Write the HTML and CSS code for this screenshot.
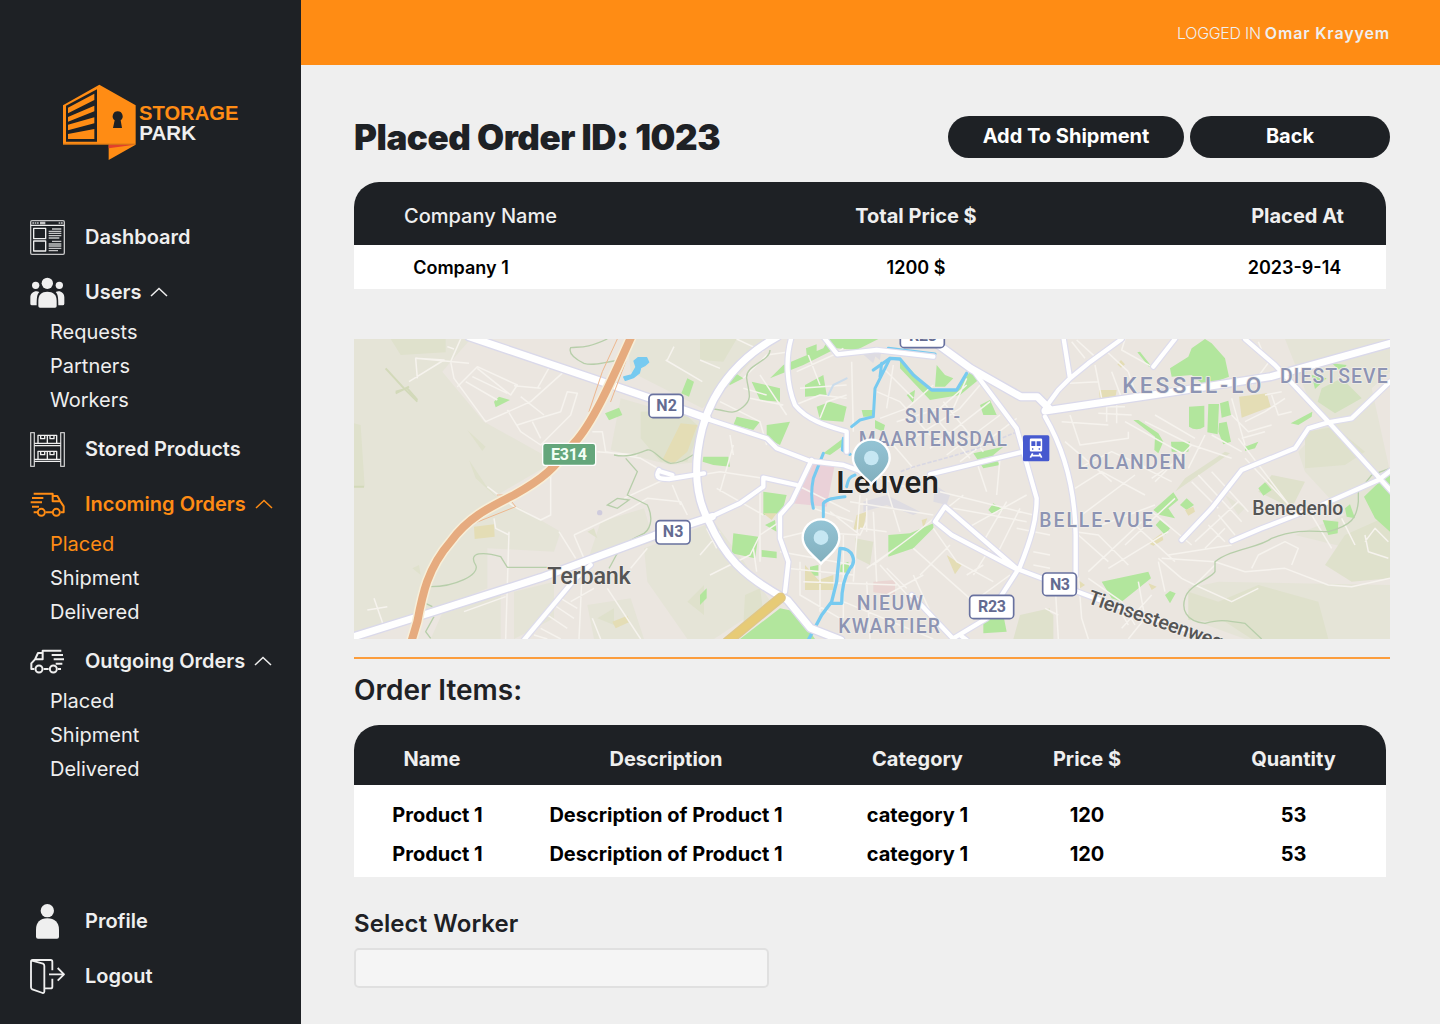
FILE: index.html
```html
<!DOCTYPE html>
<html lang="en">
<head>
<meta charset="utf-8">
<title>Storage Park - Placed Order</title>
<link rel="stylesheet" href="styles.css">
</head>
<body>
<div class="app">
  <aside class="sidebar">
    <svg class="logo" viewBox="30 21 540 240" role="img" aria-label="Storage Park">
      <path class="brand" d="M39 91 148 29 257 91V209L176 255V209H39Z"/>
      <path class="fold" d="M176 209H254L176 220Z"/>
      <path class="cut" d="M39 206.500H257V208.500H39Z" opacity=".3"/>
      <path class="cut" d="M48 92 141 43V200H48Z"/>
      <path class="brand" d="M54 98 133 56V75L54 115ZM54 126 133 92V109L54 140ZM54 149 133 127V145L54 166ZM54 177 133 162V192H54Z"/>
      <path class="cut" d="M203 109a15 15 0 0 1 9 27L216 159H189L194 136a15 15 0 0 1 9-27Z"/>
      <text class="logo-storage" x="267" y="135" textLength="298" lengthAdjust="spacingAndGlyphs">STORAGE</text>
      <text class="logo-park" x="268" y="194" textLength="170" lengthAdjust="spacingAndGlyphs">PARK</text>
    </svg>

    <nav class="nav">
      <a class="nav-item">
        <svg class="icon" viewBox="30 30 105 105">
          <g class="line">
            <g opacity=".8">
              <rect x="32" y="32" width="101" height="101" rx="4" stroke-width="4"/>
              <path d="M37 39H58M116 39H129" stroke-width="4" stroke-dasharray="5 2"/>
              <path d="M60 39H76" stroke-width="8"/>
              <path d="M96 57H124M86 64H124M86 70H124M86 77H124M86 84H118M96 94H124M86 102H124M86 108H124M86 115H124M86 122H114" stroke-width="4"/>
            </g>
            <path d="M32 46H133" stroke-width="4"/>
            <rect x="41" y="55" width="36" height="31" stroke-width="4"/>
            <rect x="41" y="93" width="36" height="30" stroke-width="4"/>
          </g>
        </svg>
        <span>Dashboard</span>
      </a>

      <a class="nav-item">
        <svg class="icon" viewBox="30 195 105 105">
          <g class="solid">
            <circle cx="82" cy="220" r="17"/><circle cx="47" cy="226" r="11"/><circle cx="118" cy="226" r="11"/>
            <path d="M55 288V272c0-18 10-27 27-27s28 9 28 27v16q0 5-5 5H60q-5 0-5-5Z"/>
            <path d="M58 246C51 253 50 264 50 286H36q-5 0-5-5V262c0-13 14-22 27-16ZM107 246c7 7 8 18 8 40h13q5 0 5-5V262c0-13-13-22-26-16Z"/>
          </g>
        </svg>
        <span>Users</span>
        <svg class="chevron" viewBox="0 0 18 10"><path d="M1 9 9 1.500 17 9"/></svg>
      </a>
      <div class="subnav"><a>Requests</a><a>Partners</a><a>Workers</a></div>

      <a class="nav-item">
        <svg class="icon" viewBox="30 21 105 105">
          <g class="line" stroke-width="4">
            <path d="M32 23H43V124H32ZM122 23H133V124H122Z" opacity=".8"/>
            <path d="M43 55H122M43 62H122M43 103H122M43 109H122"/>
            <path d="M54 55V31H110V55M82 31V55M62 31V41H74V31M90 31V41H102V31M54 103V79H110V103M82 79V103M62 79V89H74V79M90 79V89H102V79"/>
          </g>
        </svg>
        <span>Stored Products</span>
      </a>

      <a class="nav-item active">
        <svg class="icon" viewBox="30 186 105 105">
          <g class="line" stroke-width="6">
            <path d="M41 206H98V229H121L131 244V262H122M98 213H112L121 229M41 262H52M77 262H96"/>
            <path d="M36 219H70M32 232H66M36 245H57"/>
            <circle cx="64" cy="262" r="10.500"/><circle cx="109" cy="262" r="10.500"/>
          </g>
        </svg>
        <span>Incoming Orders</span>
        <svg class="chevron" viewBox="0 0 18 10"><path d="M1 9 9 1.500 17 9"/></svg>
      </a>
      <div class="subnav"><a class="active">Placed</a><a>Shipment</a><a>Delivered</a></div>

      <a class="nav-item">
        <svg class="icon" viewBox="30 12 105 105">
          <g class="line" stroke-width="6">
            <path d="M124 32H68V58H45L34 70V87H43M68 39H54L45 58M71 87H86M114 87H123"/>
            <path d="M95 45H129M101 58H132M107 71H127"/>
            <circle cx="57" cy="87" r="10.500"/><circle cx="100" cy="87" r="10.500"/>
          </g>
        </svg>
        <span>Outgoing Orders</span>
        <svg class="chevron" viewBox="0 0 18 10"><path d="M1 9 9 1.500 17 9"/></svg>
      </a>
      <div class="subnav"><a>Placed</a><a>Shipment</a><a>Delivered</a></div>
    </nav>

    <nav class="nav nav-bottom">
      <a class="nav-item">
        <svg class="icon" viewBox="30 27 105 105">
          <g class="solid"><circle cx="82" cy="47" r="20"/><path d="M48 125V104c0-21 12-34 34-34s35 13 35 34v21q0 6-6 6H54q-6 0-6-6Z"/></g>
        </svg>
        <span>Profile</span>
      </a>
      <a class="nav-item">
        <svg class="icon" viewBox="30 192 105 105">
          <g class="line" stroke-width="5.500">
            <path d="M36 197 69 206Q73 208 73 213V290Q72 295 68 294L37 283Q33 281 33 277V200Q33 195 38 195H92Q97 195 97 200V226M97 251V275Q97 280 92 280H74M87 238H131M113 219 132 238 113 257"/>
          </g>
        </svg>
        <span>Logout</span>
      </a>
    </nav>
  </aside>

  <div class="page">
    <header class="topbar"><span class="logged">LOGGED IN</span><span class="user">Omar Krayyem</span></header>
    <main class="content">
      <div class="heading">
        <h1>Placed Order ID: 1023</h1>
        <div class="actions">
          <button class="btn btn-ship">Add To Shipment</button>
          <button class="btn btn-back">Back</button>
        </div>
      </div>

      <section class="table summary">
        <div class="row head"><span class="company">Company Name</span><span>Total Price $</span><span>Placed At</span></div>
        <div class="row data"><span>Company 1</span><span>1200 $</span><span>2023-9-14</span></div>
      </section>

      <svg class="map" viewBox="0 12 3108 900" preserveAspectRatio="none">
        <defs>
          <g id="wide-roads">
            <path d="M345 5 750 142 890 190 1060 250M0 905 170 852 560 728 900 602 1075 545"/>
            <path d="M1270 5C1170 60 1080 150 1045 280C1020 380 1020 480 1065 560C1110 660 1160 720 1300 795L1370 880 1460 915"/>
            <path d="M1740 20 1850 100 2000 185H2050L2090 225M2073 228 2450 172 2750 125 3120 22"/>
          </g>
          <g id="mid-roads">
            <path d="M510 915 660 735 710 690M915 405C900 430 920 432 945 432L1050 415M915 408 955 420"/>
            <g transform="translate(1038)">
              <path d="M0 245 200 310 230 340 330 378 430 390 500 415M275 5C255 70 260 150 285 210 325 260 390 275 440 290V350M370 5 412 58 530 45 700 65"/>
              <path d="M0 560 120 505 190 455V428L290 450M335 375 275 500 240 540V610L265 680 255 770M815 100 950 280 1010 490C1010 560 990 620 960 695L860 850 760 910M690 418 970 350M955 705 735 515 705 560 755 600 955 705M800 915 780 900M635 780 760 912"/>
            </g>
            <g transform="translate(2073)">
              <path d="M55 5 75 130 40 165 0 220M75 130 130 85 230 12M390 12 325 95M600 12 690 90 850 260 1040 470M410 615 500 520 590 405 750 340 790 280 850 262 920 250 1035 140M560 618 650 580 830 510 1000 435 1040 405M0 245C55 340 90 450 92 600V720M-75 705 150 790 500 912"/>
            </g>
          </g>
          <path id="motorway" d="M832 5C780 120 720 260 660 325 600 400 570 430 480 480 400 520 340 550 290 620 220 700 205 780 190 860L172 920"/>
          <path id="parkway" d="M1120 920 1280 788"/>
          <linearGradient id="pin-fill" x2="0" y2="1"><stop offset="0" stop-color="#94c4d5"/><stop offset="1" stop-color="#82afbd"/></linearGradient>
          <g id="pin">
            <path d="M0 78C-10 64-55 35-55 0A55 55 0 1 1 55 0C55 35 10 64 0 78Z" fill="url(#pin-fill)" stroke="#fff" stroke-width="7"/>
            <circle r="22" fill="#c6e7f3"/>
          </g>
        </defs>
        <rect y="12" width="3108" height="900" fill="#ebe6e0"/>

        <g fill="#e5e4d7">
          <path d="M0 12H350L290 80 265 110 390 260 560 355 600 380 430 480 620 590 600 650 400 640V760L230 830 0 912Z"/>
          <path d="M820 12H1250L1130 150 1045 220 830 110ZM800 190 1045 260 1040 380 950 390 770 345ZM740 560 870 520 900 620 700 680ZM870 640 1080 560 1170 680 1250 800 1080 912H1000L880 740ZM480 770 600 740V850L480 912ZM280 800 440 760V912H230ZM700 810 830 790 870 912H720Z"/>
          <path transform="translate(2073)" d="M720 12H1035V110L980 160 1035 410 780 410 760 350 840 265 790 190ZM780 410H1035V912H600L430 850V760L520 740 1035 750V670L750 600 900 540ZM540 480 600 520 580 540Z"/>
        </g>
        <g fill="#dfe1cc">
          <path d="M110 12H275V52L140 60ZM0 265 20 270 32 455H0ZM340 285 395 335 385 348ZM345 375 395 450 430 490 365 430ZM860 230 980 225 1040 280 1000 380 920 380 860 310ZM730 850 780 820V870ZM175 700 195 690 200 720ZM1000 800 1050 750 1050 840ZM700 590 720 580 730 610Z"/>
          <path transform="translate(1038)" d="M0 12H110L70 80 0 75ZM465 610 520 620 510 690 470 670ZM960 840 1050 820V912H940ZM135 780 180 760 190 830 130 870Z"/>
          <path transform="translate(2073)" d="M420 430 540 350 555 355 390 470ZM780 290 870 275 960 350 900 390 780 400ZM900 600 1035 540V730L920 740 840 690ZM430 770 520 800 640 750 820 800 850 912H620L540 860 430 855ZM680 420 780 440 740 520 640 470ZM0 820 25 840V912H0Z"/>
        </g>
        <g fill="#b2e69d">
          <path d="M420 200 435 185 468 195 425 217ZM982 175 1000 130 1020 140 1005 185ZM753 235 795 218 805 240 765 256Z"/>
          <g transform="translate(1038)">
            <path d="M385 12H535L470 45 410 40 310 90 210 130 250 90 370 40ZM318 40 350 28 350 52 320 60ZM315 150 370 120 380 180 315 185ZM350 215 390 200 440 215 430 260 360 255ZM155 140 240 160 240 200 180 195ZM110 245 180 260 160 285 100 270ZM200 270 270 260 240 330 200 310ZM70 130 100 110 130 130 90 150ZM10 365 85 365 90 395 40 390 8 380ZM190 470 260 480 245 535 190 540ZM195 570 225 555 230 590ZM100 595 175 605 165 670 95 655ZM185 645 230 650V670L185 665ZM565 600 630 595 700 565 700 580 640 640 565 665ZM330 695 355 690V722H330ZM422 690 445 680 450 715 420 710ZM705 155 710 90 735 120 760 130 735 155ZM600 70 690 165 770 165 810 110 835 135 780 180 690 195 600 100ZM485 225 520 225 515 245H490ZM525 255 555 270 550 290 525 280ZM840 210 870 195 890 240 850 240ZM820 355 910 335 880 360 900 390 850 400ZM865 525 880 505 910 525 875 535ZM620 180 645 165 640 205ZM850 850 910 840 920 890 850 895ZM120 912 240 820 290 830 345 912ZM0 780 20 760V790L0 810ZM370 355 430 310 425 335 390 360Z"/>
          </g>
          <g transform="translate(2073)">
            <path d="M375 100 430 65 440 40 480 12 500 25 540 70 552 125 480 152 440 120 380 125ZM277 52 285 50 318 92 312 95ZM432 215 478 212V275Q455 290 432 275ZM490 207H522L518 298 487 292ZM525 205 550 197 558 240 530 248ZM522 265 545 260 558 320 535 328 520 290ZM265 255 280 255 340 295 355 320 340 355 328 345 330 305ZM378 320 435 320 430 350 380 350ZM600 335 640 320 630 340 600 348ZM737 265 802 230 800 245 760 270ZM325 525 385 472 400 495 370 520 390 550 345 540ZM405 510 425 490 447 510 425 525ZM332 570 345 555 375 580 360 600ZM640 460 660 442 680 465 655 482ZM170 740 310 710 318 730 230 800 200 790ZM360 780 375 768 392 775 375 805ZM833 555 880 560 878 595 850 600ZM900 520 915 508 930 550 905 545ZM957 485 1035 410V590L990 550ZM860 85 905 90 890 110ZM800 120 845 130 810 162Z"/>
            <path d="M830 160 890 130 950 190 870 235 818 200Z" fill="#d3e1bf"/>
          </g>
        </g>
        <g fill="#e4ddb5">
          <path d="M360 575 420 568 422 605 362 612ZM980 265 1030 270 1000 350 960 385 925 375ZM775 860 820 842 828 860 785 880Z"/>
          <path transform="translate(1038)" d="M315 690 355 735 400 720 400 765 315 765ZM190 535 230 535 215 555ZM470 540 500 530 490 580 460 585ZM740 660 785 690 765 718ZM665 555 682 550 670 580Z"/>
          <path transform="translate(2073)" d="M582 185 665 175 677 215 590 248ZM162 165 215 165 210 195 165 198ZM217 88 228 75 240 88 228 98ZM420 525 445 515 450 530 430 542ZM310 625 350 595 355 615 325 632ZM100 735 120 750 105 760ZM310 745 335 755 320 765Z"/>
        </g>
        <path transform="translate(1038)" d="M335 380 405 385 380 515 275 505Z" fill="#ead1d8"/>
        <path transform="translate(1038)" d="M520 740 585 735V780L520 772Z" fill="#ead6d3"/>
        <path transform="translate(1038)" d="M490 500 560 480 660 530 640 540 560 510 490 530ZM705 450 750 480 740 510 700 500ZM480 50 530 50 520 85ZM500 45 545 40 540 75Z" fill="#dedce2"/>
        <circle cx="737" cy="533" r="8" fill="#cfcbdd"/>
        <path d="M95 100 150 160 190 200M125 175 165 155M125 170 160 160 190 195M0 455H30" fill="none" stroke="#d2d9b9" stroke-width="6"/>

        <g class="minor">
          <path d="M320 12 290 80 300 130 395 260 530 200 630 110M165 140 270 75 185 70 190 130M185 70 345 85M310 155 370 95 490 150 470 180 370 100M355 125 460 175M335 140 430 195M480 152 560 160M500 185 570 240M460 225 500 290 560 330 650 240 670 175 640 170 620 230 520 260 490 270M560 310 535 260M590 90 550 160M280 35 300 42M715 290 745 290 755 350 860 370 920 405M730 350 850 360M590 400V540L560 555 480 515 400 455M660 600 690 670M615 590 665 670M660 600 830 520 880 490 980 500 1000 540M810 490 960 420M955 450 980 510M465 590 455 912M420 550 425 580 465 600M330 830 455 785M40 825 100 815M60 790 95 890M685 700 675 912M600 810 660 850M580 840 640 880M620 790 670 820M760 760 860 912M720 760 650 800M880 640 830 700M540 900 580 912M560 880 620 912M715 850 740 912M935 75 1045 140M960 35 940 75"/>
          <g transform="translate(1038)">
            <path d="M0 75 60 100M110 12 190 50M270 50 200 60 130 130M60 200 180 260 200 330M90 300 100 360M150 190 250 210M130 160 200 180M180 120 260 240M290 110 400 60 430 40M285 210 360 180 440 190M300 160 440 150M325 60 360 150M360 250 380 200 440 180M455 80 460 290M530 170 600 200 690 300M550 100 640 190M580 90 560 220M540 250 620 220 700 150M590 260 720 220 800 150M640 310 780 220 840 150M690 340 870 200M740 360 900 240M780 380 950 250M580 330 640 400M730 200 850 350M700 240 810 370M800 130 760 220M830 380 860 470M900 370 890 480M720 470 1000 540M760 520 980 560M800 580 980 480M850 620 920 500M890 660 960 520M20 580 50 640M0 660 60 590M30 720 150 660 180 600 240 560M180 680 180 470M50 460 190 540M100 330 60 470M0 420 60 410 190 430M240 610 320 590 480 600M240 650 460 690M300 680V780L420 850M310 740 590 750M360 690V830M260 700 460 720M480 480 460 740M520 530 530 740M480 580 560 590M390 530 480 600 500 560M520 690 640 600 790 480M640 640 820 800M670 720 560 780M560 700 620 760M500 740 510 912M600 630 500 700M700 580 770 680 880 740M750 630 660 720M800 720 850 690M820 800 930 720M640 720 700 850M870 640 820 720M540 690 640 800M160 640 170 710M100 680 180 730M430 600 430 850M430 800 700 912M340 520 460 560M290 450 450 530M540 430 660 470M500 490 500 590M560 460 600 590M450 500 700 540M1000 650 1050 660M1000 690 1050 700M950 580 1050 600"/>
          </g>
          <g transform="translate(2073)">
            <path d="M80 20 120 70M95 15 150 65M130 85 160 60M240 12 230 45 320 95M180 45 250 110M150 90 170 190M75 145 160 140M200 110 230 190M250 110 270 170M185 200V260M215 200V265M160 235 260 240M185 215H240M75 240 105 330 250 310 250 290M50 260 190 270M300 260 440 330 560 370M330 240 450 310M240 260 420 360 320 430M260 380 380 440M440 330 330 440M100 400 200 350 310 400M60 320 200 440M90 460 170 410 300 480M110 540 270 420M170 570 330 510M240 630 390 490M90 590 160 600 250 690M130 710 290 560M190 700 370 590M100 600 190 680M270 570 390 680M320 530 440 630M350 670 510 680M370 660 560 630M440 440 520 520M460 420 590 560M500 410 610 530M580 310 740 520M600 370 760 540M450 620 580 500M480 640 540 580M490 570 540 620M520 540 570 600M560 240 610 290 680 270M600 260 660 230 720 190M590 310 660 290M680 180 700 240 740 230M660 180 710 170M560 190 600 330M500 300 590 350M480 300 430 400M510 680 600 710 720 700 850 750 920 755 1035 730M510 690 450 750 410 730 340 670M450 750 560 800 640 760M620 700 640 660 720 620 760 640 740 690M100 720 110 850 130 912M130 730 230 800 270 870M280 740 300 850 250 912M210 800 250 870M230 880 320 780M340 680 360 770M30 740 40 912M0 820 40 840M620 150 680 70M960 620 990 580 1030 620M960 600 970 650 1030 670M800 540 860 640M890 550 930 630M640 20 660 70"/>
          </g>
        </g>
        <g class="trail">
          <path d="M760 12C700 40 680 35 650 38Q640 60 690 85C720 95 750 80 800 75M780 360C830 370 860 350 880 345S920 380 950 385C990 385 1010 360 1035 350M815 370 850 410 820 480 880 510C900 550 890 590 860 600 790 630 790 660 765 700M760 510 790 490 825 495 790 520ZM230 755C300 755 380 720 365 690 340 650 390 650 440 665L460 697H600M215 805 235 815M240 845 215 890 230 910"/>
          <path transform="translate(1038)" d="M210 45C210 80 135 90 140 130S160 190 130 215 90 230 60 225L30 220"/>
          <path transform="translate(2073)" d="M650 912 600 865C550 860 540 850 480 865 420 860 410 820 420 790 430 750 500 730 510 710V680C560 640 640 640 680 610 760 580 800 590 850 590 920 570 935 550 940 500V470L980 420 1035 400"/>
        </g>

        <g class="water">
          <path d="M809 126 832 120 846 96 840 78 852 68 878 68 884 82 872 92 860 98 856 114 838 128 814 136Z" fill="#77caf0" stroke-width="4"/>
          <g transform="translate(1038)">
            <path d="M325 915 365 840 395 800 410 740 420 640C460 640 470 680 450 700 430 730 425 770 425 805H395" stroke-width="10"/>
            <path d="M520 105 570 70 600 72 640 120 695 165 770 165 800 115" stroke-width="10"/>
            <path d="M570 70 540 130 525 160 520 245 480 255 455 275M540 125 545 85M565 40 705 57M430 310 427 345 450 358M370 355 340 430Q330 480 340 520M370 545V505C380 490 410 488 435 485M440 455C445 430 450 425 465 420" stroke-width="9"/>
            <path d="M385 180 400 150 440 130" stroke="#cbdceb" stroke-width="6"/>
          </g>
        </g>
        <path d="M1640 410C1700 385 1750 380 1870 340L1990 290" fill="none" stroke="#d8d7e3" stroke-width="5" stroke-dasharray="12 5"/>

        <g fill="none" stroke-linejoin="round" stroke-linecap="round">
          <use href="#mid-roads" stroke="#dddcec" stroke-width="20"/>
          <use href="#wide-roads" stroke="#dad9ea" stroke-width="29"/>
          <use href="#mid-roads" stroke="#fff" stroke-width="13"/>
          <use href="#wide-roads" stroke="#fff" stroke-width="21"/>
          <use href="#parkway" stroke="#dfc789" stroke-width="31"/>
          <use href="#parkway" stroke="#e7cb76" stroke-width="23"/>
          <path d="M790 12 745 110 705 230M815 80 770 200M430 480 485 480M360 565 485 515 465 490" stroke="#edb78e" stroke-width="3"/>
          <use href="#motorway" stroke="#f7efd9" stroke-width="33"/>
          <use href="#motorway" stroke="#e6ab7f" stroke-width="24"/>
        </g>

        <g class="shield">
          <rect x="885" y="178" width="102" height="70" rx="12"/>
          <rect x="906" y="557" width="102" height="70" rx="12"/>
          <rect x="1639" y="-30" width="132" height="68" rx="12"/>
          <rect x="1847" y="781" width="132" height="70" rx="12"/>
          <rect x="2066" y="714" width="101" height="68" rx="12"/>
          <text x="938" y="228" textLength="62">N2</text>
          <text x="957" y="606" textLength="62">N3</text>
          <text x="1707" y="19" textLength="84">R23</text>
          <text x="1914" y="831" textLength="84">R23</text>
          <text x="2118" y="765" textLength="60">N3</text>
        </g>
        <rect x="566" y="325" width="159" height="66" rx="8" fill="#64a67b" stroke="#fff" stroke-width="4"/>
        <text class="motorway-label" x="645" y="375" textLength="108">E314</text>

        <g class="district">
          <text x="1652" y="263" textLength="166">SINT-</text>
          <text x="1514" y="332" textLength="445">MAARTENSDAL</text>
          <text x="2305" y="174" textLength="417" font-size="68">KESSEL-LO</text>
          <text x="2778" y="144" textLength="323">DIESTSEVE</text>
          <text x="2170" y="403" textLength="325">LOLANDEN</text>
          <text x="2056" y="575" textLength="340">BELLE-VUE</text>
          <text x="1508" y="824" textLength="198">NIEUW</text>
          <text x="1453" y="893" textLength="305">KWARTIER</text>
        </g>
        <g class="place">
          <text x="580" y="747" font-size="70" textLength="250">Terbank</text>
          <text x="2695" y="540" font-size="58" textLength="273">Benedenlo</text>
          <text transform="translate(2198 804) rotate(19)" font-size="60" textLength="425">Tiensesteenweg</text>
          <text class="city" x="1447" y="474" textLength="308">Leuven</text>
        </g>
        <g transform="translate(1038)">
          <rect x="969" y="301" width="79" height="78" rx="5" fill="#4659cf"/>
          <path d="M993 314H1023V346H993Z" fill="#fff" stroke="#fff" stroke-width="7" stroke-linejoin="round"/>
          <path d="M994 319H1006V333H994ZM1010 319H1022V333H1010ZM996 340H1000V344H996ZM1016 340H1020V344H1016Z" fill="#4659cf"/>
          <path d="M998 355 991 368M1018 355 1025 368M995 362H1021" stroke="#fff" stroke-width="5"/>
        </g>
        <use href="#pin" transform="translate(1552 369)"/>
        <use href="#pin" transform="translate(1401 608)"/>
      </svg>

      <section class="items">
        <h2>Order Items:</h2>
        <div class="table products">
          <div class="row head"><span>Name</span><span>Description</span><span>Category</span><span>Price $</span><span>Quantity</span></div>
          <div class="body">
            <div class="row data"><span>Product 1</span><span>Description of Product 1</span><span>category 1</span><span>120</span><span>53</span></div>
            <div class="row data"><span>Product 1</span><span>Description of Product 1</span><span>category 1</span><span>120</span><span>53</span></div>
          </div>
        </div>
      </section>

      <label class="worker">Select Worker<input type="text"></label>
    </main>
  </div>
</div>
</body>
</html>
```
FILE: styles.css
```css
* { box-sizing: border-box; }
body {
  margin: 0;
  font-family: Inter, "Liberation Sans", sans-serif;
  background: #efefef;
  color: #1e2125;
}
.app { display: flex; width: 1440px; height: 1024px; overflow: hidden; }

/* Sidebar */
.sidebar {
  display: flex;
  flex-direction: column;
  width: 301px;
  flex: none;
  padding: 82px 0 30px 30px;
  background: #1e2125;
  color: #efefef;
}
.logo { width: 180px; height: 80px; margin: 0 0 58px 30px; display: block; }
.logo text { font-family: "Liberation Sans", Arial, sans-serif; font-weight: 700; font-size: 61px; }
.brand, .logo-storage { fill: #ff8c14; }
.logo-park { fill: #efefef; }
.fold { fill: #e2402b; }
.cut { fill: #1e2125; }
.nav { display: flex; flex-direction: column; }
.nav-item {
  display: flex;
  align-items: center;
  height: 35px;
  margin-bottom: 20px;
  font-size: 20px;
  font-weight: 600;
}
.nav-item span { padding-bottom: 1px; }
.icon { width: 35px; height: 35px; margin-right: 20px; flex: none; }
.line { fill: none; stroke: currentColor; stroke-linejoin: round; }
.solid { fill: currentColor; }
.chevron { width: 18px; height: 10px; margin: 0 0 1px 9px; fill: none; stroke: currentColor; stroke-width: 1.5; }
.subnav {
  display: flex;
  flex-direction: column;
  margin: -15px 0 15px 20px;
  font-size: 20px;
  line-height: 34px;
}
.active { color: #ff8c14; }
.nav-bottom { margin-top: auto; gap: 20px; }
.nav-bottom .nav-item { margin: 0; }

/* Page */
.page { flex: 1; }
.topbar {
  display: flex;
  align-items: center;
  justify-content: flex-end;
  gap: 4px;
  height: 65px;
  padding-right: 50px;
  background: #ff8c14;
  color: #efefef;
  font-size: 16px;
}
.logged { font-weight: 300; letter-spacing: -.3px; }
.user { font-weight: 600; letter-spacing: .85px; }
.content { display: flex; flex-direction: column; padding: 51px 50px 0 53px; }
.heading { display: flex; justify-content: space-between; align-items: center; height: 42px; }
h1 { margin: 0; font-size: 35px; font-weight: 900; letter-spacing: -.45px; }
.actions { display: flex; gap: 6px; }
.btn {
  height: 42px;
  padding: 0 0 2px;
  border: 0;
  border-radius: 21px;
  background: #1e2125;
  color: #fff;
  font: 700 20px Inter, sans-serif;
}
.btn-ship { width: 236px; }
.btn-back { width: 200px; }

.table { width: 1032px; background: #fff; border-radius: 25px 25px 0 0; overflow: hidden; }
.row { display: grid; align-items: center; text-align: center; }
.head { background: #1e2125; color: #efefef; font-size: 20px; font-weight: 650; }
.data { color: #000; }
.summary { margin-top: 24px; }
.summary .row { grid-template-columns: 253px 618px 145px; }
.summary .head { height: 63px; padding-top: 5px; }
.summary .company { font-weight: 500; }
.summary .data { height: 44px; font-size: 18px; font-weight: 600; }
.summary .data span:first-child { padding-right: 39px; }
.summary .data span:last-child { padding-right: 6px; }

.items { margin-top: 18px; border-top: 2px solid #fc9d3c; }
h2 { margin: 14px 0 18px; font-size: 28px; line-height: 34px; font-weight: 600; }
.products .row { grid-template-columns: 156px 312px 191px 148px 225px; font-size: 20px; }
.products .row span:last-child { padding-left: 40px; }
.products .head { height: 60px; padding-top: 8px; }
.products .body { padding: 10px 0 4px; }
.products .data { height: 39px; font-weight: 700; }
.products .data span:first-child { padding-left: 11px; }

.worker { display: flex; flex-direction: column; width: 415px; margin-top: 32px; font-size: 24px; line-height: 30px; font-weight: 570; letter-spacing: .08px; }
.worker input { height: 40px; margin-top: 9px; border: 2px solid #e0e0e0; border-radius: 5px; background: #f5f5f5; }

/* Map */
.map { display: block; width: 1036px; height: 300px; margin-top: 50px; }
.minor { fill: none; stroke: #f6f3ee; stroke-width: 4.5; stroke-linejoin: round; }
.trail { fill: none; stroke: #b7ceaa; stroke-width: 4; }
.water { fill: none; stroke: #77caf0; stroke-linejoin: round; stroke-linecap: round; }
.map text { font-family: Roboto, "Noto Sans", sans-serif; paint-order: stroke; stroke: #f1eeea; stroke-width: 5px; stroke-linejoin: round; }
.shield rect { fill: #fff; stroke: #68719f; stroke-width: 5; }
.shield text { font-size: 48px; font-weight: 700; fill: #646b91; text-anchor: middle; stroke: none; }
.map .motorway-label { font-size: 48px; font-weight: 700; fill: #f2fff5; text-anchor: middle; stroke: none; }
.district text { font-weight: 500; fill: #8d94b3; }
.district { font-size: 58px; }
.place text { font-weight: 500; fill: #555; }
.place .city { font-size: 94px; fill: #222; }
```
